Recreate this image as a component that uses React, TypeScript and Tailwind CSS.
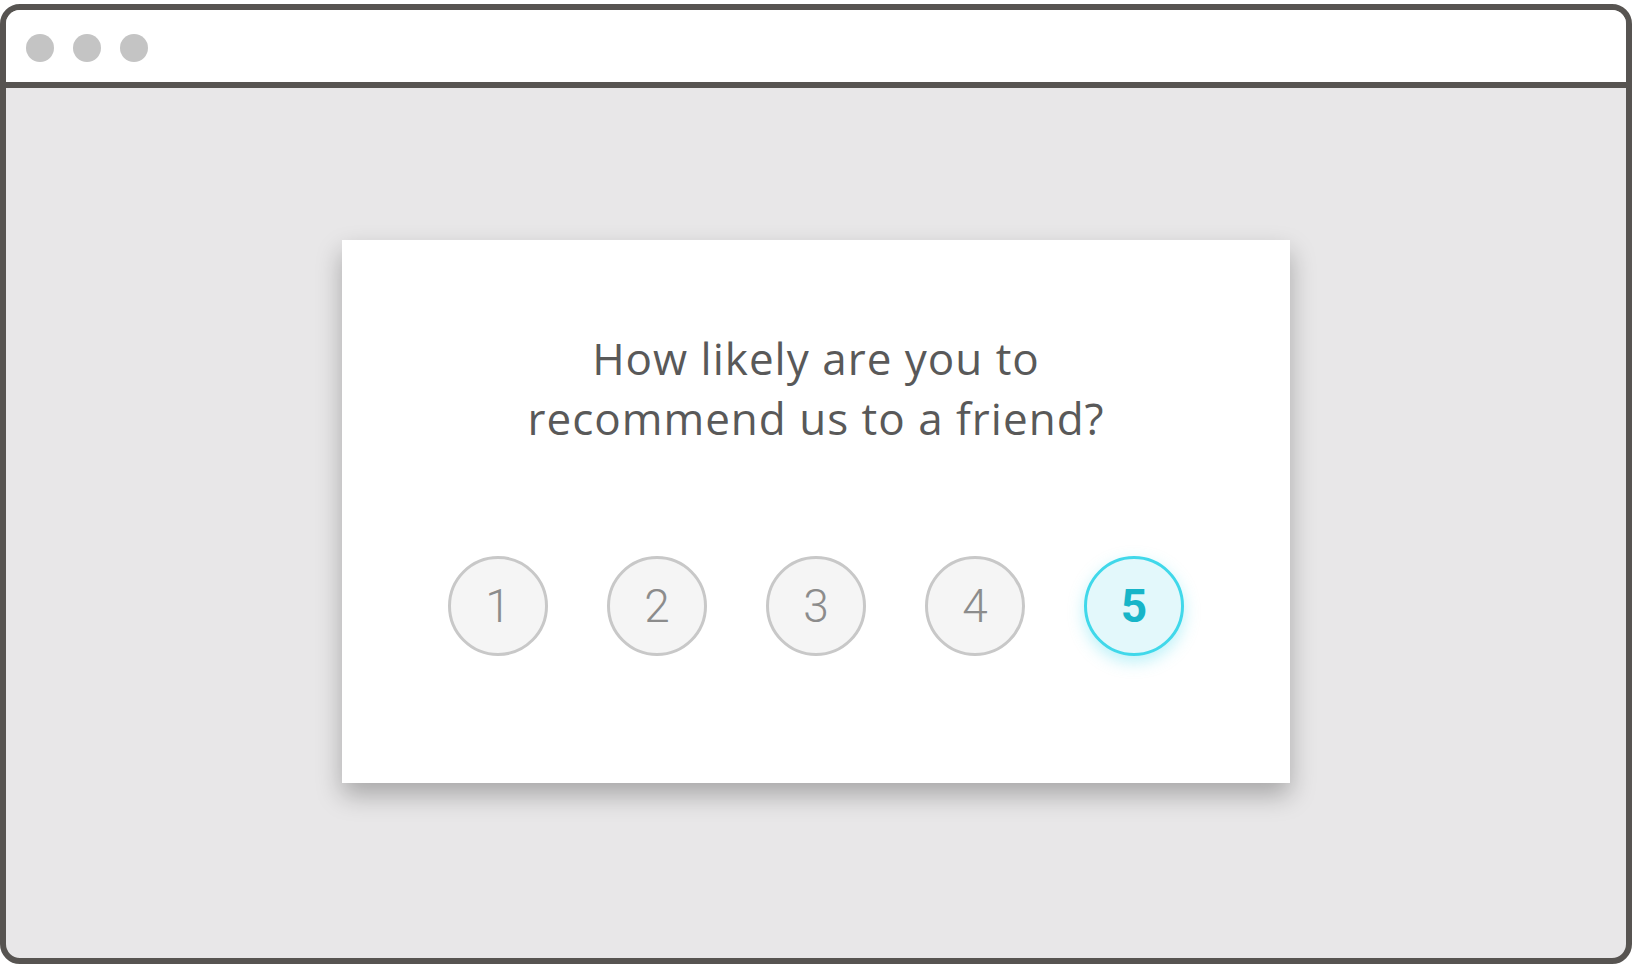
export default function App() {
  const options = [1, 2, 3, 4, 5];
  const selected = 5;

  return (
    <div className="h-[964px] w-[1632px] bg-white pt-[4px]">
      {/* Browser frame */}
      <div className="flex h-[960px] flex-col overflow-hidden rounded-[20px] border-[6px] border-[#575451] bg-[#e8e7e8]">
        {/* Title bar */}
        <div className="box-content flex h-[68px] shrink-0 items-center gap-[19px] border-b-[6px] border-[#575451] bg-white pl-[20px] pt-[4px]">
          <span className="h-[28px] w-[28px] rounded-full bg-[#c4c4c4]" />
          <span className="h-[28px] w-[28px] rounded-full bg-[#c4c4c4]" />
          <span className="h-[28px] w-[28px] rounded-full bg-[#c4c4c4]" />
        </div>

        {/* Page */}
        <div className="flex flex-1 justify-center pt-[152px]">
          <div className="flex h-[543px] w-[948px] flex-col items-center bg-white pt-[88px] shadow-[0_12px_24px_rgba(0,0,0,0.28)]">
            <h1 className="text-center font-['Open_Sans',sans-serif] text-[44px] font-normal leading-[60px] tracking-[1px] text-[#595959]">
              How likely are you to
              <br />
              recommend us to a friend?
            </h1>

            <div className="mt-[108px] flex gap-[59px]">
              {options.map(n =>
                n === selected ? (
                  <button
                    key={n}
                    type="button"
                    className="flex h-[100px] w-[100px] items-center justify-center rounded-full border-[3px] border-[#40d8ea] bg-[#e3f8fb] font-['Roboto',sans-serif] text-[46px] font-bold text-[#18b5c8] shadow-[0_6px_16px_rgba(64,216,234,0.35)]"
                  >
                    {n}
                  </button>
                ) : (
                  <button
                    key={n}
                    type="button"
                    className="flex h-[100px] w-[100px] items-center justify-center rounded-full border-[3px] border-[#c8c8c8] bg-[#f5f5f5] font-['Roboto',sans-serif] text-[46px] font-light text-[#8c8c8c]"
                  >
                    {n}
                  </button>
                ),
              )}
            </div>
          </div>
        </div>
      </div>
    </div>
  );
}
